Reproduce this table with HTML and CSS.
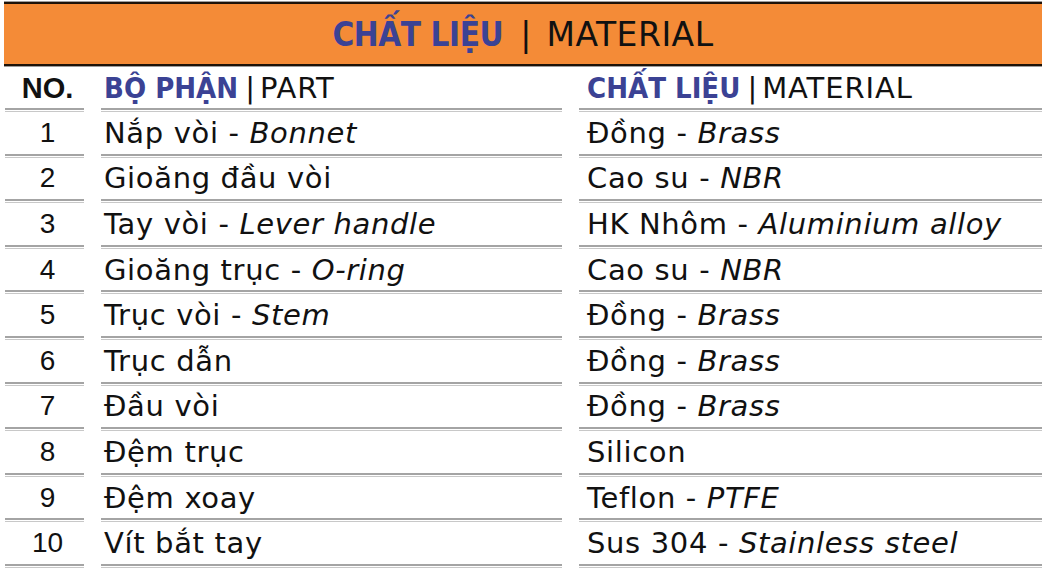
FILE: index.html
```html
<!DOCTYPE html>
<html lang="vi">
<head>
<meta charset="utf-8">
<link rel="stylesheet" href="styles.css">
</head>
<body>
<div class="sheet">
  <div class="banner">
    <span class="vn">CHẤT LIỆU</span><span class="sep">|</span><span class="en">MATERIAL</span>
  </div>
  <div class="table">
    <div class="row head">
      <div class="cell no"><b>NO.</b></div>
      <div class="cell part"><span class="t"><span class="vn">BỘ PHẬN</span><span class="bar">|</span>PART</span></div>
      <div class="cell mat"><span class="t"><span class="vn">CHẤT LIỆU</span><span class="bar">|</span>MATERIAL</span></div>
    </div>
    <div class="row"><div class="cell no">1</div><div class="cell part"><span class="t">Nắp vòi - <i>Bonnet</i></span></div><div class="cell mat"><span class="t">Đồng - <i>Brass</i></span></div></div>
    <div class="row"><div class="cell no">2</div><div class="cell part"><span class="t">Gioăng đầu vòi</span></div><div class="cell mat"><span class="t">Cao su - <i>NBR</i></span></div></div>
    <div class="row"><div class="cell no">3</div><div class="cell part"><span class="t">Tay vòi - <i>Lever handle</i></span></div><div class="cell mat"><span class="t">HK Nhôm - <i>Aluminium alloy</i></span></div></div>
    <div class="row"><div class="cell no">4</div><div class="cell part"><span class="t">Gioăng trục - <i>O-ring</i></span></div><div class="cell mat"><span class="t">Cao su - <i>NBR</i></span></div></div>
    <div class="row"><div class="cell no">5</div><div class="cell part"><span class="t">Trục vòi - <i>Stem</i></span></div><div class="cell mat"><span class="t">Đồng - <i>Brass</i></span></div></div>
    <div class="row"><div class="cell no">6</div><div class="cell part"><span class="t">Trục dẫn</span></div><div class="cell mat"><span class="t">Đồng - <i>Brass</i></span></div></div>
    <div class="row"><div class="cell no">7</div><div class="cell part"><span class="t">Đầu vòi</span></div><div class="cell mat"><span class="t">Đồng - <i>Brass</i></span></div></div>
    <div class="row"><div class="cell no">8</div><div class="cell part"><span class="t">Đệm trục</span></div><div class="cell mat"><span class="t">Silicon</span></div></div>
    <div class="row"><div class="cell no">9</div><div class="cell part"><span class="t">Đệm xoay</span></div><div class="cell mat"><span class="t">Teflon - <i>PTFE</i></span></div></div>
    <div class="row"><div class="cell no">10</div><div class="cell part"><span class="t">Vít bắt tay</span></div><div class="cell mat"><span class="t">Sus 304 - <i>Stainless steel</i></span></div></div>
  </div>
</div>
</body>
</html>
```

FILE: styles.css
```css
html, body {
  margin: 0;
  padding: 0;
  background: #ffffff;
}
body {
  font-family: "DejaVu Sans", "Liberation Sans", sans-serif;
  color: #111111;
}
.sheet {
  width: 1044px;
  height: 577px;
  overflow: hidden;
  padding-top: 2px;
  box-sizing: border-box;
}
.banner {
  margin: 0 2px 0 4px;
  height: 60px;
  background: #f48b37;
  border-top: 2px solid #1d1208;
  border-bottom: 2px solid #1d1208;
  box-shadow: 0 -1px 0 #9c9c9c, 0 1px 0 #9c9c9c;
  display: flex;
  align-items: center;
  justify-content: center;
  font-size: 33px;
  line-height: 1;
}
.banner .vn {
  font-family: "DejaVu Sans Condensed", "DejaVu Sans", sans-serif;
  font-stretch: condensed;
  font-weight: bold;
  color: #3b4294;
  letter-spacing: -0.4px;
}
.banner .sep {
  margin: 0 15px 0 17px;
  color: #111;
}
.banner .en {
  color: #111;
  letter-spacing: 0.5px;
}
.table {
  display: flex;
  flex-direction: column;
  padding-left: 5px;
}
.row {
  display: grid;
  grid-template-columns: 79px 461px 463px;
  column-gap: 17px;
  height: 45.6px;
}
.row.head {
  height: 44px;
}
.cell {
  display: flex;
  align-items: center;
  font-size: 29px;
  letter-spacing: 0.65px;
  border-bottom: 2px solid #a4a4a4;
  box-shadow: 0 1px 0 #ffffff, 0 2px 0 #c8c8c8;
  white-space: nowrap;
  padding-top: 2px;
}
.cell.no {
  justify-content: center;
  padding-left: 6px;
  font-family: "Liberation Sans", Arial, sans-serif;
  font-size: 28px;
  letter-spacing: 0;
}
.cell.part {
  padding-left: 3px;
}
.cell.mat {
  padding-left: 8px;
}
.head .cell {
  letter-spacing: 0.9px;
}
.head .no b {
  font-weight: bold;
  font-size: 29px;
  letter-spacing: 0;
}
.head .vn {
  font-family: "DejaVu Sans Condensed", "DejaVu Sans", sans-serif;
  font-stretch: condensed;
  font-weight: bold;
  color: #3b4294;
  letter-spacing: 0;
}
.head .bar {
  margin: 0 5px 0 7px;
  letter-spacing: 0;
}
```
